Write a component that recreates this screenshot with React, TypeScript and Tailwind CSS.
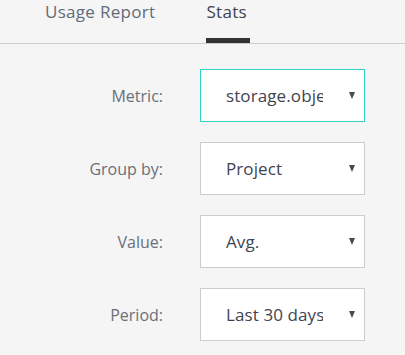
import React from 'react';

const fields = [
  { label: 'Metric:', value: 'storage.objects', focused: true },
  { label: 'Group by:', value: 'Project', focused: false },
  { label: 'Value:', value: 'Avg.', focused: false },
  { label: 'Period:', value: 'Last 30 days', focused: false },
];

const SelectBox: React.FC<{ value: string; focused: boolean }> = ({ value, focused }) => (
  <div
    className={
      'w-[165px] h-[53px] bg-white border flex items-center pl-[25px] pr-[9px] ' +
      (focused ? 'border-[#2fd3c9]' : 'border-[#cccccc]')
    }
  >
    <span className="w-[97px] overflow-hidden whitespace-nowrap text-[17px] tracking-[0.1px] text-[#3f4450]">{value}</span>
    <span className="ml-auto w-0 h-0 border-l-[3.5px] border-r-[3.5px] border-t-[7px] border-l-transparent border-r-transparent border-t-[#4a4a4a]" />
  </div>
);

export default function App() {
  return (
    <div className="w-[405px] h-[355px] bg-[#f5f5f5] overflow-hidden" style={{ fontFamily: '"Open Sans", "Liberation Sans", sans-serif' }}>
      <div className="h-[44px] border-b border-[#cccccc] flex pl-[45px] gap-[51px]">
        <div className="text-[17px] tracking-[0.3px] text-[#5f6b7a] leading-none pt-[3px]">Usage Report</div>
        <div className="flex flex-col justify-between">
          <div className="text-[17px] tracking-[0.3px] text-[#3c4250] leading-none pt-[3px]">Stats</div>
          <div className="h-[5px] w-[44px] bg-[#333333]" />
        </div>
      </div>
      <div className="flex flex-col gap-[20px] pt-[25px]">
        {fields.map((f) => (
          <div key={f.label} className="flex items-center">
            <div className="w-[163px] text-right text-[16px] text-[#6a6f78]">{f.label}</div>
            <div className="ml-[37px]">
              <SelectBox value={f.value} focused={f.focused} />
            </div>
          </div>
        ))}
      </div>
    </div>
  );
}
